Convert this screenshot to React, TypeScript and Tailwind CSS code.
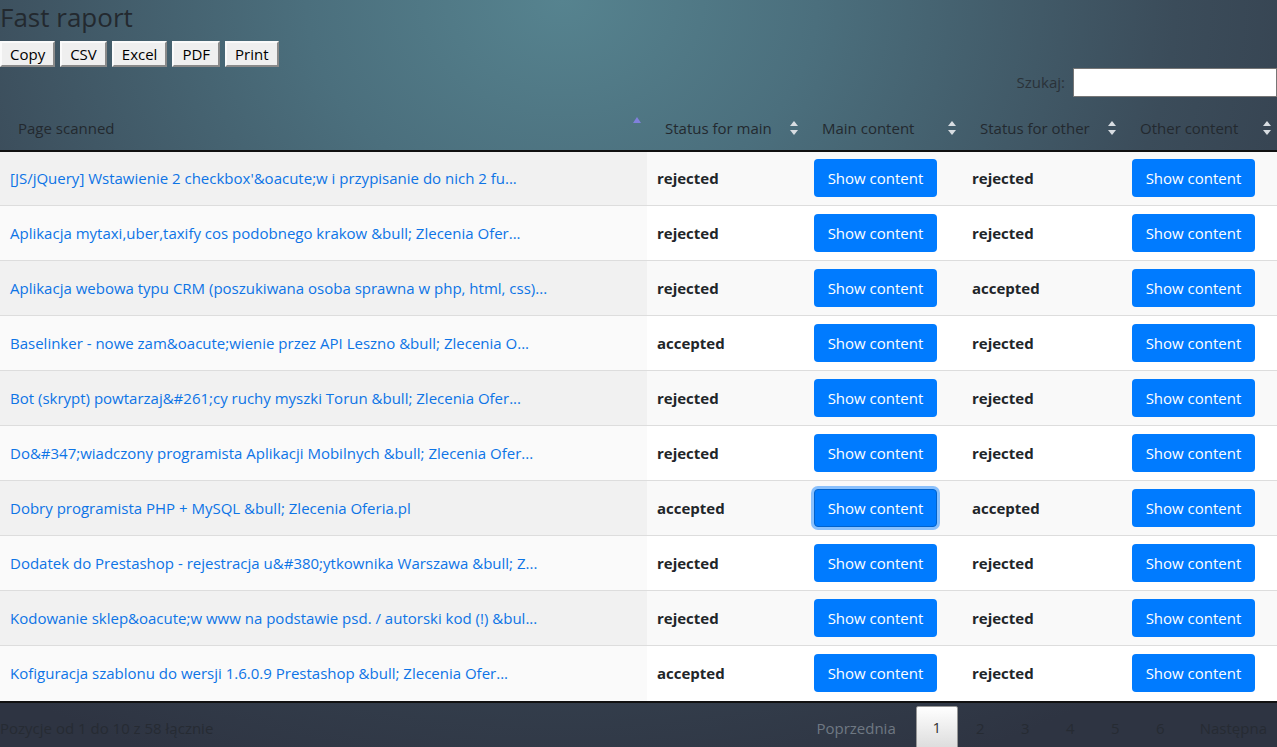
import React from 'react';

type Row = { title: string; main: string; other: string; focused?: boolean };

const ROWS: Row[] = [
  { title: "[JS/jQuery] Wstawienie 2 checkbox'&oacute;w i przypisanie do nich 2 fu...", main: 'rejected', other: 'rejected' },
  { title: 'Aplikacja mytaxi,uber,taxify cos podobnego krakow &bull; Zlecenia Ofer...', main: 'rejected', other: 'rejected' },
  { title: 'Aplikacja webowa typu CRM (poszukiwana osoba sprawna w php, html, css)...', main: 'rejected', other: 'accepted' },
  { title: 'Baselinker - nowe zam&oacute;wienie przez API Leszno &bull; Zlecenia O...', main: 'accepted', other: 'rejected' },
  { title: 'Bot (skrypt) powtarzaj&#261;cy ruchy myszki Torun &bull; Zlecenia Ofer...', main: 'rejected', other: 'rejected' },
  { title: 'Do&#347;wiadczony programista Aplikacji Mobilnych &bull; Zlecenia Ofer...', main: 'rejected', other: 'rejected' },
  { title: 'Dobry programista PHP + MySQL &bull; Zlecenia Oferia.pl', main: 'accepted', other: 'accepted', focused: true },
  { title: 'Dodatek do Prestashop - rejestracja u&#380;ytkownika Warszawa &bull; Z...', main: 'rejected', other: 'rejected' },
  { title: 'Kodowanie sklep&oacute;w www na podstawie psd. / autorski kod (!) &bul...', main: 'rejected', other: 'rejected' },
  { title: 'Kofiguracja szablonu do wersji 1.6.0.9 Prestashop &bull; Zlecenia Ofer...', main: 'accepted', other: 'rejected' },
];

function SortBoth() {
  return (
    <svg width="8" height="14" viewBox="0 0 8 14" className="shrink-0">
      <path d="M4 0 L8 5 L0 5 Z" fill="#d8dde2" />
      <path d="M4 14 L8 9 L0 9 Z" fill="#d8dde2" />
    </svg>
  );
}

function SortAsc() {
  return (
    <svg width="8" height="14" viewBox="0 0 8 14" className="shrink-0">
      <path d="M4 0 L8 6 L0 6 Z" fill="#8080dc" />
    </svg>
  );
}

function ShowButton({ focused }: { focused?: boolean }) {
  return (
    <button
      className={
        'h-[38px] w-[123px] rounded-[4px] bg-[#007bff] text-white text-[15px] ' +
        (focused ? 'shadow-[0_0_0_3px_rgba(0,123,255,0.45)] border border-[#0062cc]' : '')
      }
    >
      Show content
    </button>
  );
}

const exportButtons = ['Copy', 'CSV', 'Excel', 'PDF', 'Print'];

export default function App() {
  return (
    <div
      className="min-h-screen h-[747px] overflow-hidden bg-[radial-gradient(ellipse_80%_110%_at_44%_0%,#56838f_0%,#4b6f7d_25%,#3b4c5a_60%,#2e3442_100%)] text-[#23292f]"
      style={{ fontFamily: '"Open Sans", "Noto Sans", sans-serif' }}
    >
      <h1 className="h-[36px] text-[26px] leading-[34px] text-[#23292f]">Fast raport</h1>

      <div className="mt-[5px] flex gap-[5px]">
        {exportButtons.map((b) => (
          <button
            key={b}
            className="h-[26px] px-[8px] bg-[#efefef] text-[15px] leading-none text-black border-2 border-t-[#fafafa] border-l-[#fafafa] border-r-[#8a8a8a] border-b-[#8a8a8a]"
          >
            {b}
          </button>
        ))}
      </div>

      <div className="mt-[1px] flex items-center justify-end gap-[8px]">
        <label className="text-[15px] text-[#2a3239]">Szukaj:</label>
        <input className="h-[29px] w-[204px] bg-white border border-[#767676]" />
      </div>

      <table className="mt-[10px] w-full table-fixed border-collapse text-[15px]">
        <colgroup>
          <col className="w-[647px]" />
          <col className="w-[157px]" />
          <col className="w-[158px]" />
          <col className="w-[160px]" />
          <col className="w-[155px]" />
        </colgroup>
        <thead>
          <tr className="border-b-2 border-[#111]">
            <th className="py-[10px] pl-[18px] pr-[6px] text-left font-normal">
              <div className="flex items-center justify-between">
                <span>Page scanned</span>
                <span className="-mt-[8px]"><SortAsc /></span>
              </div>
            </th>
            {['Status for main', 'Main content', 'Status for other', 'Other content'].map((h) => (
              <th key={h} className="py-[10px] pl-[18px] pr-[6px] text-left font-normal">
                <div className="flex items-center justify-between whitespace-nowrap">
                  <span>{h}</span>
                  <SortBoth />
                </div>
              </th>
            ))}
          </tr>
        </thead>
        <tbody>
          {ROWS.map((r, i) => {
            const odd = i % 2 === 0;
            return (
              <tr key={i} className={'h-[55px] border-t border-[#dddddd] ' + (odd ? 'bg-[#f9f9f9]' : 'bg-white')}>
                <td className={'px-[10px] whitespace-nowrap overflow-hidden ' + (odd ? 'bg-[#f1f1f1]' : 'bg-[#fafafa]')}>
                  <a className="text-[#0d74e6]">{r.title}</a>
                </td>
                <td className="px-[10px] font-bold text-[#212529]">{r.main}</td>
                <td className="px-[10px]">
                  <ShowButton focused={r.focused} />
                </td>
                <td className="px-[10px] font-bold text-[#212529]">{r.other}</td>
                <td className="px-[10px]">
                  <ShowButton />
                </td>
              </tr>
            );
          })}
        </tbody>
      </table>

      <div className="border-t-2 border-[#111] flex items-start justify-between">
        <div className="pt-[14px] text-[15px] text-[#262b33]">Pozycje od 1 do 10 z 58 łącznie</div>
        <div className="flex items-start pr-[10px] text-[15px]">
          <span className="pt-[14px] mr-[20px] text-[#6f7883]">Poprzednia</span>
          <span className="mt-[3px] h-[44px] w-[42px] flex items-center justify-center border border-[#979797] rounded-[2px] bg-[linear-gradient(#ffffff,#dcdcdc)] text-[#333]">1</span>
          {['2', '3', '4', '5', '6'].map((n) => (
            <span key={n} className="pt-[14px] w-[45px] text-center text-[#262b33]">{n}</span>
          ))}
          <span className="pt-[14px] ml-[17px] text-[#262b33]">Następna</span>
        </div>
      </div>
    </div>
  );
}
